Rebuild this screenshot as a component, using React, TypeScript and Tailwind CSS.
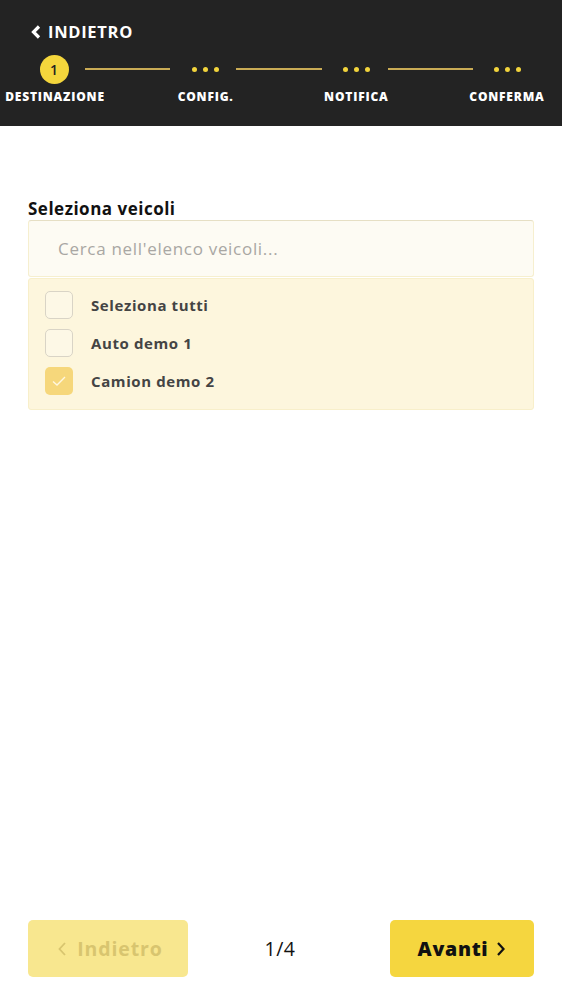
import { useState } from "react";

const steps = ["DESTINAZIONE", "CONFIG.", "NOTIFICA", "CONFERMA"];

function Dots() {
  return (
    <div className="flex items-center gap-[6px]">
      <span className="w-[5px] h-[5px] rounded-full bg-[#f2d43c]" />
      <span className="w-[5px] h-[5px] rounded-full bg-[#f2d43c]" />
      <span className="w-[5px] h-[5px] rounded-full bg-[#f2d43c]" />
    </div>
  );
}

export default function App() {
  const [selected, setSelected] = useState<string[]>(["Camion demo 2"]);
  const vehicles = ["Auto demo 1", "Camion demo 2"];

  const toggle = (name: string) => {
    if (name === "Seleziona tutti") {
      setSelected(selected.length === vehicles.length ? [] : vehicles);
      return;
    }
    setSelected(prev => (prev.includes(name) ? prev.filter(v => v !== name) : [...prev, name]));
  };

  const rows = ["Seleziona tutti", ...vehicles];

  return (
    <div
      className="h-screen flex flex-col bg-white"
      style={{ fontFamily: "'Open Sans', Lato, sans-serif" }}
    >
      {/* header with steps */}
      <div className="h-[126px] bg-[#232323] shrink-0">
        <button className="flex items-center gap-[6px] pl-[30px] pt-[22px] text-white">
          <svg width="12" height="14" viewBox="0 0 12 14">
            <path d="M9 1.5L3.5 7L9 12.5" fill="none" stroke="white" strokeWidth="3.2" />
          </svg>
          <span className="text-[16.5px] font-bold leading-5 tracking-[0.7px]">INDIETRO</span>
        </button>

        <div className="flex items-center px-[23px] mt-[13px] h-[28px]">
          <div className="w-[62px] flex justify-center">
            <div className="w-[29px] h-[29px] rounded-full bg-[#f4d63c] flex items-center justify-center text-[#222] text-[14px] font-semibold">
              1
            </div>
          </div>
          <div className="flex-1 h-[2px] bg-[#c9ab55] mr-[4px]" />
          <div className="w-[62px] flex justify-center">
            <Dots />
          </div>
          <div className="flex-1 h-[2px] bg-[#c9ab55] mr-[4px]" />
          <div className="w-[62px] flex justify-center">
            <Dots />
          </div>
          <div className="flex-1 h-[2px] bg-[#c9ab55] mr-[4px]" />
          <div className="w-[62px] flex justify-center">
            <Dots />
          </div>
        </div>

        <div className="flex justify-between mt-[6px]">
          {steps.map(s => (
            <div key={s} className="w-[110px] text-center text-white text-[12px] font-extrabold leading-4 tracking-[0.8px]">
              {s}
            </div>
          ))}
        </div>
      </div>

      {/* content */}
      <div className="flex-1 px-[28px] pt-[73px]">
        <div className="text-[17px] font-bold text-[#111] leading-5 mb-[1px] tracking-[0.5px]">Seleziona veicoli</div>
        <input
          placeholder="Cerca nell'elenco veicoli..."
          className="w-full h-[57px] bg-[#fdfbf3] border border-[#f6efcf] border-t-[#e6dfc4] rounded-[3px] pl-[29px] text-[17px] tracking-[0.7px] text-[#555] placeholder:text-[#a9a7a3] outline-none"
        />
        <div className="mt-[1px] bg-[#fdf6dd] border border-[#f8efca] rounded-[3px] pt-[12px] pb-[14px] px-[16px] flex flex-col gap-[10px]">
          {rows.map(r => {
            const checked =
              r === "Seleziona tutti" ? selected.length === vehicles.length : selected.includes(r);
            return (
              <button key={r} onClick={() => toggle(r)} className="flex items-center gap-[18px] text-left">
                <span
                  className={
                    checked
                      ? "w-[28px] h-[28px] rounded-[5px] bg-[#f6d77b] flex items-center justify-center"
                      : "w-[28px] h-[28px] rounded-[5px] border border-[#d9d4c6] bg-[#fdf8e6]"
                  }
                >
                  {checked && (
                    <svg width="16" height="12" viewBox="0 0 16 12">
                      <path d="M2 6.5L6 10L14 2" fill="none" stroke="#fff7e0" strokeWidth="1.4" />
                    </svg>
                  )}
                </span>
                <span className="text-[15px] font-bold text-[#444] leading-5 tracking-[0.6px]">{r}</span>
              </button>
            );
          })}
        </div>
      </div>

      {/* footer */}
      <div className="flex items-center justify-between px-[28px] pb-[23px] shrink-0">
        <button className="w-[160px] h-[57px] rounded-[5px] bg-[#f8e78f] text-[#d8c56f] text-[19.5px] font-bold tracking-[0.9px] flex items-center justify-center gap-[10px] pl-[4px]">
          <svg width="10" height="16" viewBox="0 0 10 16">
            <path d="M8 2L2.5 8L8 14" fill="none" stroke="#d8c56f" strokeWidth="1.8" />
          </svg>
          Indietro
        </button>
        <div className="text-[19.5px] text-[#111] mr-[18px] tracking-[0.5px]">1/4</div>
        <button className="w-[144px] h-[57px] rounded-[5px] bg-[#f5d63f] text-[#111] text-[19.5px] font-extrabold tracking-[0.7px] flex items-center justify-center gap-[8px]">
          Avanti
          <svg width="10" height="16" viewBox="0 0 10 16">
            <path d="M2 2L7.5 8L2 14" fill="none" stroke="#111" strokeWidth="2.2" />
          </svg>
        </button>
      </div>
    </div>
  );
}
